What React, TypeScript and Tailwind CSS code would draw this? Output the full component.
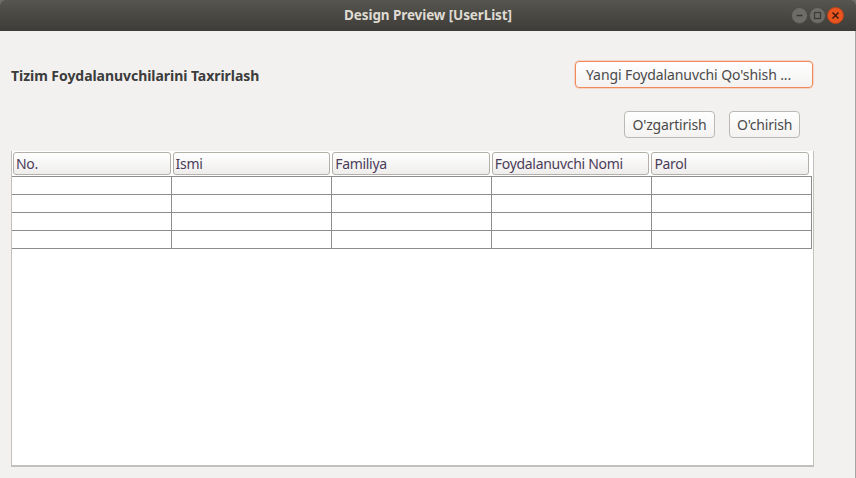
import React from "react";

const cols = ["No.", "Ismi", "Familiya", "Foydalanuvchi Nomi", "Parol"];

function WinBtn({ kind }: { kind: "min" | "max" | "close" }) {
  const close = kind === "close";
  return (
    <div
      className={
        "w-[17px] h-[17px] rounded-full flex items-center justify-center border " +
        (close
          ? "bg-[#e9541f] border-[#b9431a]"
          : "bg-[#6e6c67] border-[#4a4944]")
      }
    >
      <svg width="9" height="9" viewBox="0 0 9 9">
        {kind === "min" && <line x1="1.5" y1="4.5" x2="7.5" y2="4.5" stroke="#3a3935" strokeWidth="1.3" />}
        {kind === "max" && <rect x="1.5" y="1.5" width="6" height="6" fill="none" stroke="#3a3935" strokeWidth="1.2" />}
        {close && (
          <g stroke="#3a1a0c" strokeWidth="1.4">
            <line x1="1.5" y1="1.5" x2="7.5" y2="7.5" />
            <line x1="7.5" y1="1.5" x2="1.5" y2="7.5" />
          </g>
        )}
      </svg>
    </div>
  );
}

function Btn({ children, focused, className }: { children: React.ReactNode; focused?: boolean; className?: string }) {
  return (
    <button
      className={
        "h-[27px] rounded-[4px] border bg-gradient-to-b from-[#ffffff] to-[#f3f2f1] text-[14px] text-[#4a4a4a] leading-none flex items-center justify-center " +
        (focused ? "border-[#f08a5d] shadow-[0_0_0_0.5px_#f6b89a]" : "border-[#bcb9b4]") +
        " " +
        (className ?? "")
      }
    >
      {children}
    </button>
  );
}

export default function App() {
  return (
    <div
      className="w-[856px] h-[478px] bg-[#6f6e6a] overflow-hidden"
      style={{ fontFamily: '"Noto Sans", "DejaVu Sans", sans-serif' }}
    >
      <div className="w-[856px] h-[478px] flex flex-col rounded-t-[6px] overflow-hidden">
        {/* title bar */}
        <div className="h-[31px] shrink-0 bg-gradient-to-b from-[#57554f] to-[#3d3c38] flex items-center relative">
          <div className="flex-1 text-center text-[13.5px] font-bold text-[#dfdbd2] tracking-[-0.1px]">
            Design Preview [UserList]
          </div>
          <div className="absolute right-[12px] top-[7px] flex gap-[1px]">
            <WinBtn kind="min" />
            <WinBtn kind="max" />
            <WinBtn kind="close" />
          </div>
        </div>

        {/* content */}
        <div className="flex-1 bg-[#f2f1f0] flex flex-col pl-[11px] pr-[42px] border-r border-[#a9a6a1]">
          <div className="flex items-center justify-between pt-[30px]">
            <div className="text-[14px] font-bold text-[#3c3c3c] tracking-[-0.05px] pt-[1px]">
              Tizim Foydalanuvchilarini Taxrirlash
            </div>
            <Btn focused className="w-[238px] tracking-[-0.1px] !justify-start pl-[10px]">
              Yangi Foydalanuvchi Qo'shish ...
            </Btn>
          </div>

          <div className="flex justify-end gap-[14px] mt-[23px] pr-[13px]">
            <Btn className="w-[91px] tracking-[-0.2px]">O'zgartirish</Btn>
            <Btn className="w-[71px] tracking-[-0.2px]">O'chirish</Btn>
          </div>

          {/* table */}
          <div className="mt-[13px] h-[316px] w-[803px] bg-white border-b-2 border-x border-[#c2c0bc] flex flex-col">
            <div className="grid grid-cols-5 pt-[1px] pb-[1px] pr-[3px]">
              {cols.map((c) => (
                <div key={c} className="px-[1px]">
                  <div className="h-[23px] rounded-[3px] border border-[#b3afa9] bg-gradient-to-b from-[#ffffff] to-[#eeedeb] flex items-center pl-[2px] text-[14px] text-[#4b3c5a] tracking-[-0.3px] leading-none">
                    {c}
                  </div>
                </div>
              ))}
            </div>
            <div className="mr-[1px] border-t border-[#8d8d8d]">
              {[0, 1, 2, 3].map((r) => (
                <div key={r} className="grid grid-cols-5 h-[18px] border-b border-[#8d8d8d]">
                  {cols.map((c) => (
                    <div key={c} className="border-r border-[#8d8d8d]" />
                  ))}
                </div>
              ))}
            </div>
          </div>
        </div>
      </div>
    </div>
  );
}
